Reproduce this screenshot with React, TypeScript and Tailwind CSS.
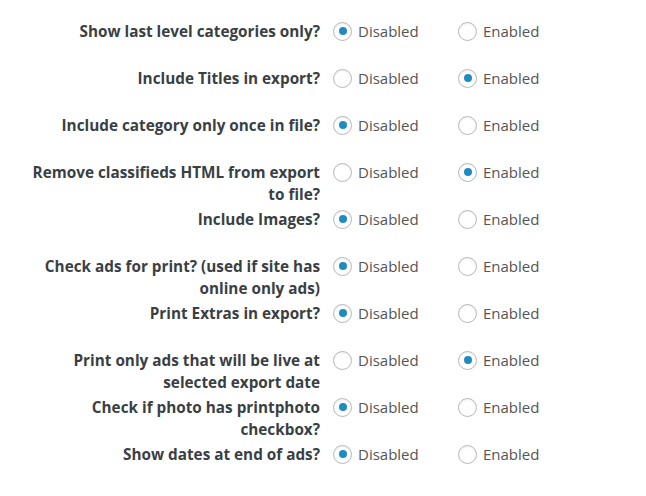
import React from 'react';

type Row = { label: React.ReactNode; enabled: boolean };

const rows: Row[] = [
  { label: 'Show last level categories only?', enabled: false },
  { label: 'Include Titles in export?', enabled: true },
  { label: 'Include category only once in file?', enabled: false },
  { label: <>Remove classifieds HTML from export<br />to file?</>, enabled: true },
  { label: 'Include Images?', enabled: false },
  { label: <>Check ads for print? (used if site has<br />online only ads)</>, enabled: false },
  { label: 'Print Extras in export?', enabled: false },
  { label: <>Print only ads that will be live at<br />selected export date</>, enabled: true },
  { label: <>Check if photo has printphoto<br />checkbox?</>, enabled: false },
  { label: 'Show dates at end of ads?', enabled: false },
];

function Radio({ checked, text }: { checked: boolean; text: string }) {
  return (
    <div className="flex items-center h-[22px] w-[125px]">
      <span className="w-[19px] h-[19px] shrink-0 rounded-full border border-[#b4b9be] bg-white shadow-[inset_0_1px_2px_rgba(0,0,0,0.07)] flex items-center justify-center">
        {checked && <span className="w-[8px] h-[8px] rounded-full bg-[#1e8cbe]" />}
      </span>
      <span className="ml-[6px] text-[15px] text-[#555]">{text}</span>
    </div>
  );
}

export default function App() {
  return (
    <div className="w-[646px] h-[496px] bg-white pt-[20px]" style={{ fontFamily: '"Open Sans", sans-serif' }}>
      {rows.map((row, i) => (
        <div key={i} className="flex items-start h-[47px]">
          <div className="w-[320px] text-right font-bold text-[15.3px] leading-[22px] text-[#3a3f44] whitespace-nowrap">
            {row.label}
          </div>
          <div className="flex ml-[13px]">
            <Radio checked={!row.enabled} text="Disabled" />
            <Radio checked={row.enabled} text="Enabled" />
          </div>
        </div>
      ))}
    </div>
  );
}
